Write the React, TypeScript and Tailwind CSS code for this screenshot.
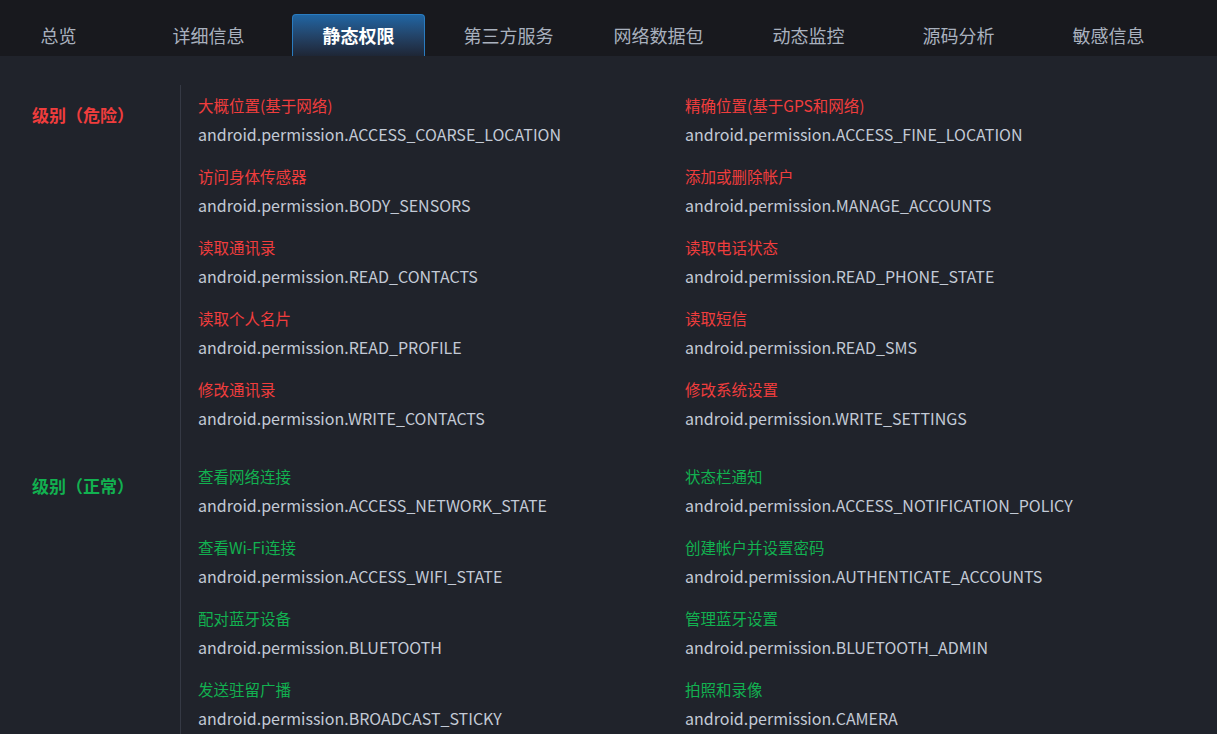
const tabs = ['总览', '详细信息', '静态权限', '第三方服务', '网络数据包', '动态监控', '源码分析', '敏感信息']

interface Permission {
    title: string
    name: string
}

const dangerous: Permission[] = [
    { title: '大概位置(基于网络)', name: 'android.permission.ACCESS_COARSE_LOCATION' },
    { title: '精确位置(基于GPS和网络)', name: 'android.permission.ACCESS_FINE_LOCATION' },
    { title: '访问身体传感器', name: 'android.permission.BODY_SENSORS' },
    { title: '添加或删除帐户', name: 'android.permission.MANAGE_ACCOUNTS' },
    { title: '读取通讯录', name: 'android.permission.READ_CONTACTS' },
    { title: '读取电话状态', name: 'android.permission.READ_PHONE_STATE' },
    { title: '读取个人名片', name: 'android.permission.READ_PROFILE' },
    { title: '读取短信', name: 'android.permission.READ_SMS' },
    { title: '修改通讯录', name: 'android.permission.WRITE_CONTACTS' },
    { title: '修改系统设置', name: 'android.permission.WRITE_SETTINGS' },
]

const normal: Permission[] = [
    { title: '查看网络连接', name: 'android.permission.ACCESS_NETWORK_STATE' },
    { title: '状态栏通知', name: 'android.permission.ACCESS_NOTIFICATION_POLICY' },
    { title: '查看Wi-Fi连接', name: 'android.permission.ACCESS_WIFI_STATE' },
    { title: '创建帐户并设置密码', name: 'android.permission.AUTHENTICATE_ACCOUNTS' },
    { title: '配对蓝牙设备', name: 'android.permission.BLUETOOTH' },
    { title: '管理蓝牙设置', name: 'android.permission.BLUETOOTH_ADMIN' },
    { title: '发送驻留广播', name: 'android.permission.BROADCAST_STICKY' },
    { title: '拍照和录像', name: 'android.permission.CAMERA' },
]

const Section: React.FC<{ label: string; danger?: boolean; items: Permission[] }> = ({ label, danger, items }) => {
    return (
        <div className="flex">
            <div className="w-[181px] shrink-0 border-r border-[#353944] pl-8 pt-[18px]">
                <div className={`text-[17px] font-bold leading-6 ${danger ? 'text-[#f03d3d]' : 'text-[#12b150]'}`}>
                    {label}
                </div>
            </div>
            <div className="grid flex-1 grid-cols-[487px_1fr] pl-[17px]">
                {items.map((p) => (
                    <div key={p.name} className="h-[71px] pt-[10px]">
                        <div className={`text-[15.5px] leading-5 ${danger ? 'text-[#f03d3d]' : 'text-[#12b150]'}`}>
                            {p.title}
                        </div>
                        <div className="mt-[9px] text-[16px] leading-5 text-[#c3cad6]">{p.name}</div>
                    </div>
                ))}
            </div>
        </div>
    )
}

export default function App() {
    return (
        <div
            className="h-[734px] w-[1217px] overflow-hidden bg-[#20232b]"
            style={{ fontFamily: '"Noto Sans CJK SC", "Noto Sans", sans-serif' }}
        >
            <div className="flex h-14 items-end bg-[#18191e]">
                <div className="-ml-2 flex gap-[17px]">
                    {tabs.map((t) =>
                        t === '静态权限' ? (
                            <div
                                key={t}
                                className="flex h-[42px] w-[133px] items-center justify-center rounded-t border border-b-0 border-[#2a7cc0] bg-gradient-to-b from-[#1f65a3] to-[#1e2636] text-[18px] font-bold text-white"
                            >
                                {t}
                            </div>
                        ) : (
                            <div
                                key={t}
                                className="flex h-[42px] w-[133px] items-center justify-center text-[18px] text-[#a9b1be]"
                            >
                                {t}
                            </div>
                        ),
                    )}
                </div>
            </div>
            <div className="pt-[29px]">
                <Section label="级别（危险）" danger items={dangerous} />
                <div className="h-4 w-[181px] border-r border-[#353944]" />
                <Section label="级别（正常）" items={normal} />
            </div>
        </div>
    )
}
